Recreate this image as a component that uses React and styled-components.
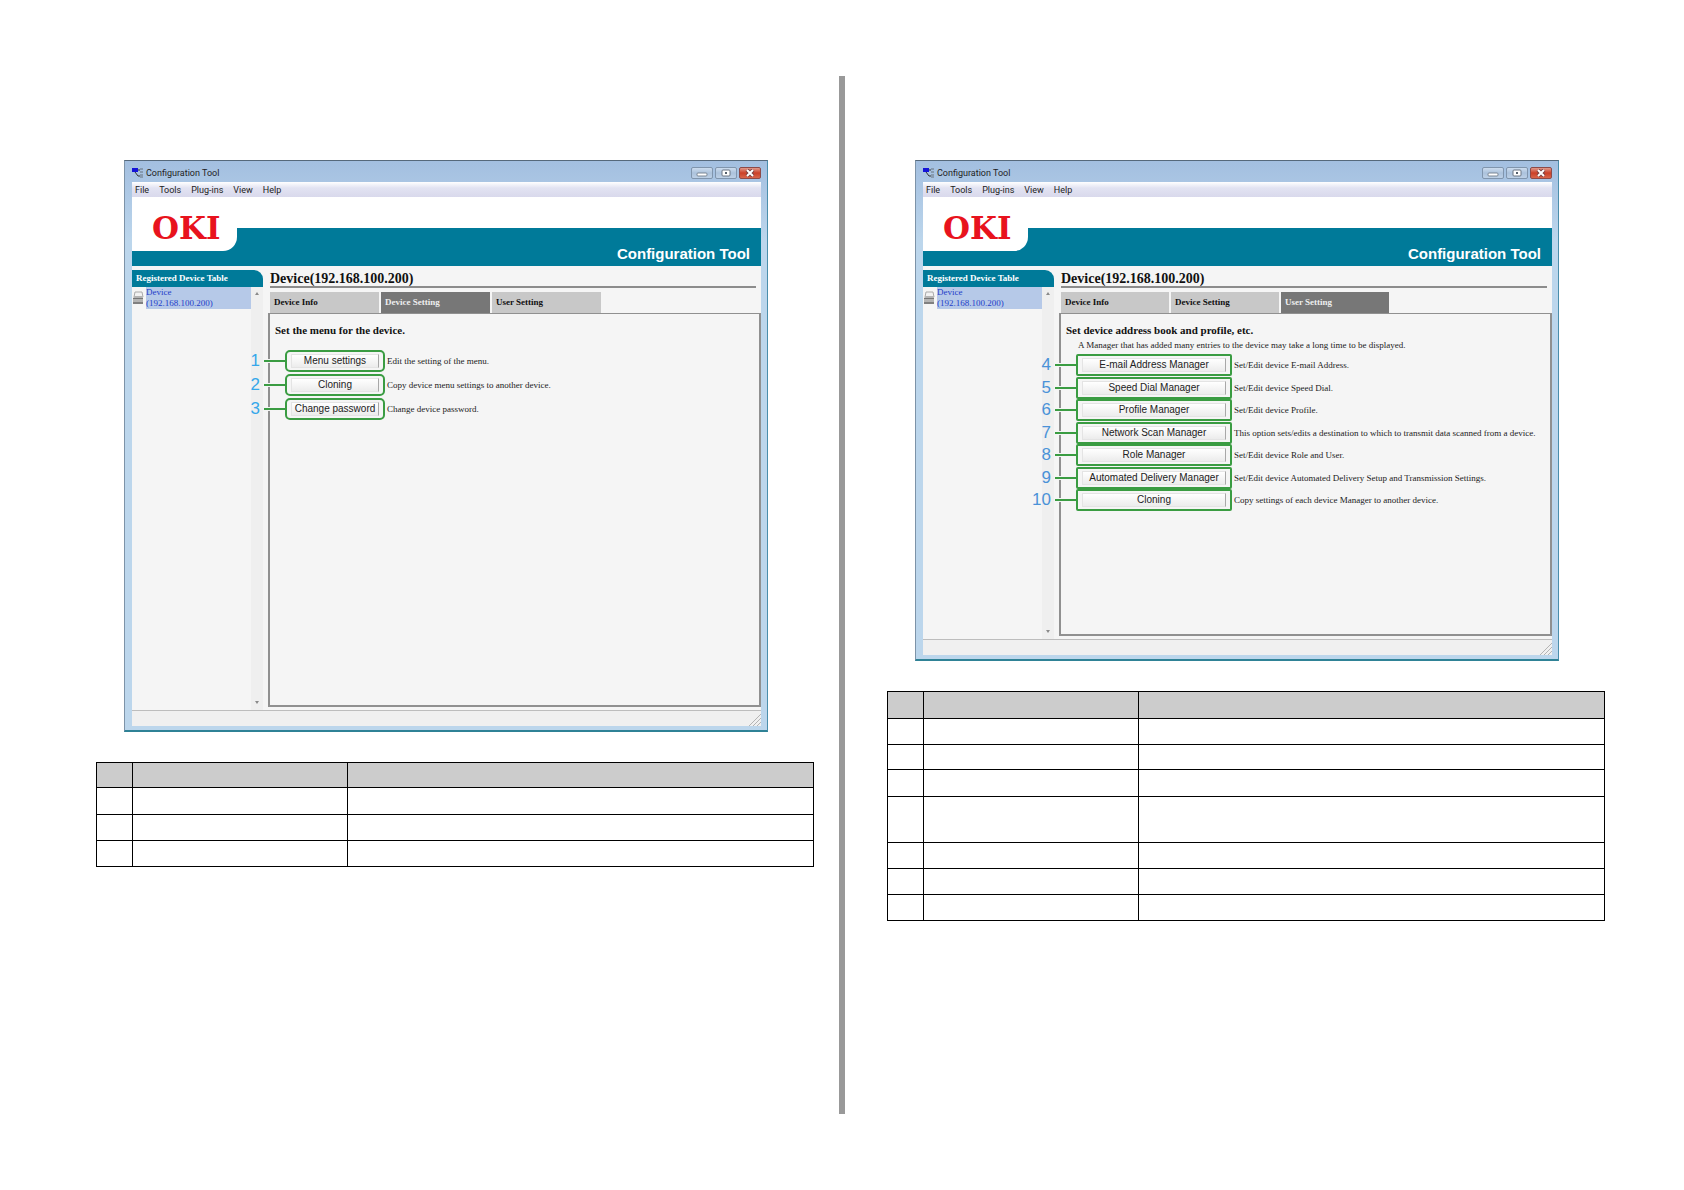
import styled, { createGlobalStyle } from "styled-components";

const deviceActions = [
  { no: 1, label: "Menu settings", text: "Edit the setting of the menu." },
  {
    no: 2,
    label: "Cloning",
    text: "Copy device menu settings to another device.",
  },
  { no: 3, label: "Change password", text: "Change device password." },
];

const userActions = [
  {
    no: 4,
    label: "E-mail Address Manager",
    text: "Set/Edit device E-mail Address.",
  },
  { no: 5, label: "Speed Dial Manager", text: "Set/Edit device Speed Dial." },
  { no: 6, label: "Profile Manager", text: "Set/Edit device Profile." },
  {
    no: 7,
    label: "Network Scan Manager",
    text: "This option sets/edits a destination to which to transmit data scanned from a device.",
  },
  { no: 8, label: "Role Manager", text: "Set/Edit device Role and User." },
  {
    no: 9,
    label: "Automated Delivery Manager",
    text: "Set/Edit device Automated Delivery Setup and Transmission Settings.",
  },
  {
    no: 10,
    label: "Cloning",
    text: "Copy settings of each device Manager to another device.",
  },
];

const menus = ["File", "Tools", "Plug-ins", "View", "Help"];
const tabs = ["Device Info", "Device Setting", "User Setting"];

const AppIcon = () => (
  <svg width="12" height="10" viewBox="0 0 12 10" aria-hidden="true">
    <rect x="0" y="0" width="6" height="4" fill="#1414d8" />
    <path d="M3 4l3 4h2M6 2h2" fill="none" stroke="#333" />
    <path d="M8 1h3M8 4h3M8 7h3M8 9h3" fill="none" stroke="#66727e" />
  </svg>
);

const PrinterIcon = () => (
  <svg width="12" height="14" viewBox="0 0 12 14" aria-hidden="true">
    <path d="M3 1h7l1 5H2z" fill="#f2f2f2" stroke="#aaa" />
    <path d="M1 7l2-2h7l1 2v6H1z" fill="#b4b4b4" />
    <path d="M1 7h10v1H1z" fill="#777" />
    <path d="M1 11h10v2H1z" fill="#808080" />
  </svg>
);

const Arrow = ({ down }) => (
  <svg width="6" height="4" viewBox="0 0 6 4" aria-hidden="true">
    <path d={down ? "M1 0h4L3 3z" : "M1 4h4L3 1z"} fill="#8a8a8a" />
  </svg>
);

const Grip = () => (
  <svg width="12" height="12" viewBox="0 0 12 12" aria-hidden="true">
    <path d="M0 12L12 0M4 12l8-8M8 12l4-4" stroke="#b4b4b4" />
  </svg>
);

const ConfigWindow = ({ active, title, note, actions, wide, height }) => (
  <Window $height={height}>
    <TitleBar>
      <AppIcon />
      <span>Configuration Tool</span>
      <Controls>
        <ControlButton aria-label="Minimize">
          <svg width="12" height="8" viewBox="0 0 12 8">
            <rect x="1" y="4" width="10" height="3" rx="1" fill="#fff" stroke="#7b8795" />
          </svg>
        </ControlButton>
        <ControlButton aria-label="Maximize">
          <svg width="12" height="8" viewBox="0 0 12 8">
            <rect x="2" y="1" width="8" height="6" rx="1" fill="#fff" stroke="#6c7784" />
            <rect x="5" y="3" width="2" height="2" fill="#55606c" />
          </svg>
        </ControlButton>
        <ControlButton $close aria-label="Close">
          <svg width="12" height="8" viewBox="0 0 12 8">
            <path d="M3 1l6 6M9 1L3 7" stroke="#7d4040" strokeWidth="4" />
            <path d="M3 1l6 6M9 1L3 7" stroke="#fff" strokeWidth="2" />
          </svg>
        </ControlButton>
      </Controls>
    </TitleBar>
    <MenuBar>
      {menus.map((menu) => (
        <MenuItem key={menu}>{menu}</MenuItem>
      ))}
    </MenuBar>
    <Banner>
      <Logo>OKI</Logo>
      <Product>Configuration Tool</Product>
    </Banner>
    <Body>
      <Sidebar>
        <SidebarTitle>Registered Device Table</SidebarTitle>
        <SidebarBody>
          <Device href="#device">
            <PrinterIcon />
            <DeviceName>
              Device
              <br />
              (192.168.100.200)
            </DeviceName>
          </Device>
          <Scrollbar>
            <Arrow />
            <Arrow down />
          </Scrollbar>
        </SidebarBody>
      </Sidebar>
      <Main>
        <Heading>Device(192.168.100.200)</Heading>
        <Tabs role="tablist">
          {tabs.map((tab) => (
            <Tab
              key={tab}
              role="tab"
              aria-selected={tab === active}
              $active={tab === active}
              $wide={wide}
            >
              {tab}
            </Tab>
          ))}
        </Tabs>
        <Panel>
          <PanelTitle>{title}</PanelTitle>
          {note && <Note>{note}</Note>}
          <Actions $wide={wide}>
            {actions.map(({ no, label, text }) => (
              <Action key={no}>
                <Callout $wide={wide}>{no}</Callout>
                <Outline $wide={wide}>
                  <ActionButton>{label}</ActionButton>
                </Outline>
                <span>{text}</span>
              </Action>
            ))}
          </Actions>
        </Panel>
      </Main>
    </Body>
    <StatusBar>
      <Grip />
    </StatusBar>
  </Window>
);

const ItemTable = ({ head, rows }) => (
  <Table>
    <colgroup>
      <col className="no" />
      <col className="item" />
      <col />
    </colgroup>
    <thead>
      <Row $height={head}>
        <th />
        <th />
        <th />
      </Row>
    </thead>
    <tbody>
      {rows.map((height, i) => (
        <Row key={i} $height={height}>
          <td />
          <td />
          <td />
        </Row>
      ))}
    </tbody>
  </Table>
);

const App = () => {
  return (
    <>
      <GlobalStyle />
      <Spread>
        <Page>
          <ConfigWindow
            active="Device Setting"
            title="Set the menu for the device."
            actions={deviceActions}
            height={572}
          />
          <ItemTable head={25} rows={[27, 26, 26]} />
        </Page>
        <Divider />
        <Page>
          <ConfigWindow
            active="User Setting"
            title="Set device address book and profile, etc."
            note="A Manager that has added many entries to the device may take a long time to be displayed."
            actions={userActions}
            wide
            height={501}
          />
          <ItemTable head={27} rows={[26, 25, 27, 46, 26, 26, 26]} />
        </Page>
      </Spread>
    </>
  );
};

const GlobalStyle = createGlobalStyle`
  * {
    box-sizing: border-box;
  }
  body {
    margin: 0;
    background: #fff;
    color: #222;
    font-family: "Liberation Serif", serif;
  }
  button {
    margin: 0;
    padding: 0;
    border: 0;
    background: none;
    color: inherit;
    font: inherit;
  }
  svg {
    display: block;
    flex: none;
  }
`;

const Spread = styled.main`
  min-height: 100vh;
  padding: 76px 79px 76px 96px;
  display: grid;
  grid-template-columns: 1fr 73px 1fr;
`;

const Page = styled.section`
  min-width: 0;
  padding-top: 84px;
`;

const Divider = styled.div`
  width: 6px;
  margin-left: 25px;
  background: #999;
`;

const Window = styled.div`
  min-height: ${({ $height }) => $height}px;
  margin: 0 46px 30px 28px;
  padding: 0 6px 4px 7px;
  display: flex;
  flex-direction: column;
  border: 1px solid #7d93a8;
  border-top-color: #56697b;
  border-right-color: #4a8eac;
  border-bottom: 2px solid #2f8296;
  background: linear-gradient(#a3bfe0, #bcd6ec 80px);
`;

const TitleBar = styled.header`
  height: 21px;
  padding-top: 3px;
  display: flex;
  align-items: center;
  gap: 2px;
  color: #222;
  font-family: Roboto, sans-serif;
  font-size: 9px;
`;

const Controls = styled.div`
  margin-left: auto;
  display: flex;
  gap: 2px;
`;

const ControlButton = styled.button`
  width: 22px;
  height: 12px;
  display: grid;
  place-items: center;
  border: 1px solid ${({ $close }) => ($close ? "#8e4a48" : "#8095ad")};
  border-radius: 2px;
  background: ${({ $close }) =>
    $close
      ? "linear-gradient(#e09a8c, #cc4028 50%, #d8664c)"
      : "linear-gradient(#ccdcee, #abc2dc 50%, #bdd0e6)"};
`;

const MenuBar = styled.nav`
  height: 15px;
  padding-left: 3px;
  display: flex;
  align-items: center;
  gap: 10px;
  background: linear-gradient(#fff, #e2e3f2 40%, #d9d9ec);
  font-family: Roboto, sans-serif;
  font-size: 9px;
`;

const MenuItem = styled.button`
  line-height: 14px;
`;

const Banner = styled.div`
  height: 69px;
  padding-right: 11px;
  display: flex;
  justify-content: space-between;
  background: linear-gradient(#fff 31px, #007a99 31px);
`;

const Logo = styled.div`
  width: 105px;
  height: 54px;
  padding: 15px 0 0 20px;
  border-radius: 0 0 14px 0;
  background: #fff;
  color: #e8131d;
  font: bold 31px/32px "DejaVu Serif", serif;
`;

const Product = styled.div`
  align-self: flex-end;
  color: #fff;
  font: bold 15px/24px "Liberation Sans", sans-serif;
`;

const Body = styled.div`
  flex: 1;
  padding-top: 4px;
  display: flex;
  gap: 5px;
  background: #f5f5f5;
`;

const Sidebar = styled.aside`
  width: 131px;
  flex: none;
  display: flex;
  flex-direction: column;
`;

const SidebarTitle = styled.h2`
  margin: 0;
  padding-left: 4px;
  border-radius: 0 9px 0 0;
  background: #007a99;
  color: #fff;
  font-size: 9px;
  line-height: 17px;
`;

const SidebarBody = styled.div`
  flex: 1;
  display: flex;
  justify-content: space-between;
`;

const Device = styled.a`
  width: 119px;
  height: 22px;
  display: flex;
  align-items: center;
  gap: 2px;
  color: #2440c8;
  font-size: 9px;
  line-height: 11px;
  text-decoration: none;
`;

const DeviceName = styled.span`
  flex: 1;
  background: #b6c9e8;
`;

const Scrollbar = styled.div`
  width: 12px;
  padding: 4px 0 5px;
  display: flex;
  flex-direction: column;
  align-items: center;
  justify-content: space-between;
  background: #efefef;
`;

const Main = styled.div`
  flex: 1;
  min-width: 0;
  display: flex;
  flex-direction: column;
`;

const Heading = styled.h1`
  margin: 0 5px 4px 2px;
  padding-top: 1px;
  border-bottom: 2px solid #8c8c8c;
  color: #111;
  font-size: 14px;
  line-height: 15px;
`;

const Tabs = styled.div`
  padding-left: 2px;
  display: flex;
  gap: 2px;
`;

const Tab = styled.button`
  width: ${({ $wide }) => ($wide ? 108 : 109)}px;
  padding-left: 4px;
  background: ${({ $active }) => ($active ? "#777" : "#c8c8c8")};
  color: ${({ $active }) => ($active ? "#eee" : "#111")};
  font-size: 9px;
  font-weight: bold;
  line-height: 21px;
  text-align: left;
`;

const Panel = styled.div`
  flex: 1;
  margin-bottom: 3px;
  padding: 8px 5px;
  border: 2px solid #909090;
  border-top-width: 1px;
`;

const PanelTitle = styled.h3`
  margin: 0;
  color: #111;
  font-size: 11px;
  line-height: 16px;
`;

const Note = styled.p`
  margin: 0 0 0 12px;
  font-size: 9px;
  line-height: 14px;
`;

const Actions = styled.div`
  height: ${({ $wide }) => ($wide ? 157 : 70)}px;
  margin: ${({ $wide }) => ($wide ? "2px 0 0 10px" : "12px 0 0 10px")};
  display: flex;
  flex-direction: column;
  justify-content: space-between;
`;

const Action = styled.div`
  position: relative;
  display: flex;
  align-items: center;
  gap: 2px;
  font-size: 9px;
  white-space: nowrap;
`;

// number and leader line drawn over the window, outside the panel
const Callout = styled.span`
  position: absolute;
  right: 100%;
  display: flex;
  align-items: center;
  gap: 4px;
  color: ${({ $wide }) => ($wide ? "#4a92d8" : "#35a7ea")};
  font: 17px/22px "Liberation Sans", sans-serif;
  &::after {
    content: "";
    width: 21px;
    height: 2px;
    background: #3a9c42;
    box-shadow: 0 0 0 1px #f5f5f5;
  }
`;

const Outline = styled.div`
  position: relative;
  width: ${({ $wide }) => ($wide ? 156 : 100)}px;
  height: 22px;
  padding: 2px 4px;
  border: 2px solid #3a9c42;
  border-radius: ${({ $wide }) => ($wide ? 2 : 5)}px;
  background: #f5f5f5;
`;

const ActionButton = styled.button`
  width: 100%;
  height: 14px;
  border: 1px solid #e4e4e4;
  border-right-color: #a8a8a8;
  background: linear-gradient(#fff, #ececec);
  font: 10px/12px "Liberation Sans", sans-serif;
`;

const StatusBar = styled.footer`
  height: 16px;
  display: flex;
  align-items: flex-end;
  justify-content: flex-end;
  border-top: 1px solid #bdbdbd;
  background: #f0f0f0;
`;

const Table = styled.table`
  width: 100%;
  table-layout: fixed;
  border-collapse: collapse;
  .no {
    width: 36px;
  }
  .item {
    width: 215px;
  }
  th,
  td {
    padding: 0;
    border: 1px solid #000;
  }
  th {
    background: #ccc;
  }
`;

const Row = styled.tr`
  height: ${({ $height }) => $height}px;
`;

export default App;
